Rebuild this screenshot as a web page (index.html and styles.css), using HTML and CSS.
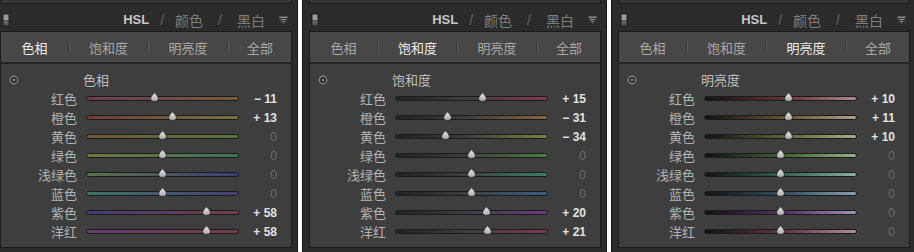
FILE: index.html
```html
<!DOCTYPE html>
<html lang="zh-CN">
<head>
    <meta charset="UTF-8">
    <meta name="viewport" content="width=device-width, initial-scale=1.0">
    <title>HSL 面板</title>
    <link rel="stylesheet" href="styles.css">
</head>
<body>
    <div class="strip" id="strip"></div>

    <script>
        // Slider rows shared by every panel
        const colors = [
            { key: 'red', name: '红色' },
            { key: 'orange', name: '橙色' },
            { key: 'yellow', name: '黄色' },
            { key: 'green', name: '绿色' },
            { key: 'aqua', name: '浅绿色' },
            { key: 'blue', name: '蓝色' },
            { key: 'purple', name: '紫色' },
            { key: 'magenta', name: '洋红' }
        ];

        const tabs = ['色相', '饱和度', '明亮度', '全部'];

        const panels = [
            { mode: 'hue', title: '色相', tab: 0, values: [-11, 13, 0, 0, 0, 0, 58, 58] },
            { mode: 'sat', title: '饱和度', tab: 1, values: [15, -31, -34, 0, 0, 0, 20, 21] },
            { mode: 'lum', title: '明亮度', tab: 2, values: [10, 11, 10, 0, 0, 0, 0, 0] }
        ];

        // Track is 151px inside its border, +/-100 covers 76px each side
        const TRACK_INNER = 151;
        const HALF_RANGE = 76;

        const thumbSvg = `
            <svg class="thumb-icon" width="9" height="10" viewBox="0 0 9 10">
                <defs>
                    <linearGradient id="tg" x1="0" y1="0" x2="0" y2="1">
                        <stop offset="0" stop-color="#f0f0f0"/>
                        <stop offset="1" stop-color="#a4a4a4"/>
                    </linearGradient>
                </defs>
                <path d="M4.5 0.6 C5.4 2.2 8.4 4.2 8.4 6.6 C8.4 8.6 6.9 9.4 4.5 9.4 C2.1 9.4 0.6 8.6 0.6 6.6 C0.6 4.2 3.6 2.2 4.5 0.6 Z"
                      fill="url(#tg)" stroke="#262626" stroke-width="0.8"/>
            </svg>`;

        function formatValue(v) {
            if (v === 0) return '0';
            return (v < 0 ? '\u2212 ' : '+ ') + Math.abs(v);
        }

        function buildHeader() {
            return `
                <div class="header">
                    <svg class="switch" width="8" height="14" viewBox="0 0 8 14">
                        <rect x="0.5" y="0.5" width="7" height="13" fill="#1d1d1d"/>
                        <rect x="1.5" y="1.5" width="5" height="6" fill="#9a9a9a"/>
                        <rect x="1.5" y="7.5" width="5" height="5" fill="#575757"/>
                        <rect x="1.5" y="9" width="5" height="1" fill="#6e6e6e"/>
                    </svg>
                    <div class="modes">
                        <span class="mode active">HSL</span>
                        <span class="slash">/</span>
                        <span class="mode">颜色</span>
                        <span class="slash wide">/</span>
                        <span class="mode">黑白</span>
                        <svg class="collapse" width="9" height="8" viewBox="0 0 9 8">
                            <polygon points="0,0.5 9,0.5 4.5,8" fill="#8c8c8c"/>
                            <rect x="0" y="2" width="9" height="1" fill="#3a3a3a"/>
                            <rect x="0" y="4" width="9" height="1" fill="#3a3a3a"/>
                            <rect x="0" y="6" width="9" height="1" fill="#3a3a3a"/>
                        </svg>
                    </div>
                </div>`;
        }

        function buildTabs(active) {
            let html = '<div class="tabs">';
            tabs.forEach((t, i) => {
                if (i > 0) html += '<span class="sep"></span>';
                html += `<span class="tab tab-${i} ${i === active ? 'active' : ''}">${t}</span>`;
            });
            html += '</div>';
            return html;
        }

        function buildRow(color, value) {
            const left = Math.round(TRACK_INNER / 2 + value / 100 * HALF_RANGE - 4.5);
            return `
                <div class="row c-${color.key}">
                    <span class="label">${color.name}</span>
                    <div class="track">
                        <span class="thumb" style="left: ${left}px">${thumbSvg}</span>
                    </div>
                    <span class="value ${value === 0 ? 'zero' : ''}">${formatValue(value)}</span>
                </div>`;
        }

        function buildPanel(panel) {
            let html = `<div class="panel ${panel.mode}">`;
            html += '<div class="prev"></div>';
            html += buildHeader();
            html += '<div class="box">';
            html += buildTabs(panel.tab);
            html += '<div class="content">';
            html += `
                <div class="title-row">
                    <svg class="target" width="10" height="10" viewBox="0 0 10 10">
                        <circle cx="5" cy="5" r="3.8" fill="#2e2e2e" stroke="#8a8a8a" stroke-width="1.2"/>
                        <circle cx="5" cy="5" r="1.2" fill="#8a8a8a"/>
                    </svg>
                    <span class="title">${panel.title}</span>
                </div>`;
            colors.forEach((c, i) => {
                html += buildRow(c, panel.values[i]);
            });
            html += '</div></div></div>';
            return html;
        }

        document.getElementById('strip').innerHTML = panels.map(buildPanel).join('');
    </script>
</body>
</html>
```

FILE: styles.css
```css
* {
    box-sizing: border-box;
}
html, body {
    margin: 0;
    padding: 0;
}
body {
    width: 914px;
    height: 252px;
    overflow: hidden;
    background-color: #ffffff;
    font-family: "Noto Sans CJK SC", "Liberation Sans", sans-serif;
}
.strip {
    display: flex;
    gap: 4px;
    margin-left: -7px;
}
.panel {
    flex: 0 0 305px;
    height: 252px;
    background-color: #2b2b2b;
    border-left: 1px solid #171717;
    border-right: 1px solid #171717;
}
.prev {
    height: 4px;
    margin: 0 5px 5px 6px;
    background-color: #353535;
    border: 1px solid #1b1b1b;
    border-top: none;
}
.header {
    height: 22px;
    display: flex;
    align-items: center;
    justify-content: space-between;
    padding: 0 9px 0 8px;
}
.switch {
    display: block;
}
.modes {
    display: flex;
    align-items: center;
}
.mode {
    font-size: 14px;
    color: #7e7e7e;
    line-height: 22px;
}
.mode.active {
    font-family: "Liberation Sans", sans-serif;
    font-weight: bold;
    font-size: 13px;
    color: #c6c6c6;
}
.slash {
    font-family: "Liberation Sans", sans-serif;
    font-size: 14px;
    color: #626262;
    margin: 0 11px;
}
.slash.wide {
    margin: 0 15px;
}
.collapse {
    display: block;
    margin-left: 14px;
}
.box {
    margin: 0 5px 0 6px;
    border: 1px solid #1b1b1b;
}
.tabs {
    height: 32px;
    display: flex;
    align-items: center;
    background-color: #474747;
    border-bottom: 2px solid #262626;
}
.tab {
    text-align: center;
    font-size: 13px;
    color: #a8a8a8;
}
.tab.active {
    color: #ececec;
}
.tab-0 { width: 67px; }
.tab-1 { width: 77px; }
.tab-2 { width: 78px; }
.tab-3 { flex: 1; }
.sep {
    width: 2px;
    height: 12px;
    border-left: 1px solid #383838;
    border-right: 1px solid #5a5a5a;
}
.content {
    background-color: #3e3e3e;
    padding: 6px 0 6px;
}
.title-row {
    height: 19px;
    display: flex;
    align-items: center;
}
.target {
    display: block;
    margin-left: 8px;
}
.title {
    margin-left: 64px;
    font-size: 13px;
    color: #bdbdbd;
}
.row {
    height: 19px;
    display: grid;
    grid-template-columns: 76px 153px 1fr;
    column-gap: 9px;
    align-items: center;
    padding-right: 14px;
}
.label {
    text-align: right;
    font-size: 13px;
    color: #b3b3b3;
    line-height: 19px;
}
.value {
    text-align: right;
    font-family: "Liberation Sans", sans-serif;
    font-weight: bold;
    font-size: 12px;
    color: #e2e2e2;
}
.value.zero {
    color: #6c6c6c;
    font-weight: normal;
}
.track {
    position: relative;
    height: 5px;
    border: 1px solid #1c1c1c;
    border-radius: 3px;
}
.thumb {
    position: absolute;
    top: -5px;
    width: 9px;
    height: 10px;
}
.thumb-icon {
    display: block;
}

/* hue tracks */
.hue .c-red .track { background: linear-gradient(to right, #6e3a55, #765c3a); }
.hue .c-orange .track { background: linear-gradient(to right, #743a3a, #74743e); }
.hue .c-yellow .track { background: linear-gradient(to right, #765838, #54743c); }
.hue .c-green .track { background: linear-gradient(to right, #74743c, #3c745e); }
.hue .c-aqua .track { background: linear-gradient(to right, #587446, #3c3c76); }
.hue .c-blue .track { background: linear-gradient(to right, #3c7466, #463f76); }
.hue .c-purple .track { background: linear-gradient(to right, #3e3e76, #763c4a); }
.hue .c-magenta .track { background: linear-gradient(to right, #663c74, #763c42); }

/* saturation tracks */
.sat .c-red .track { background: linear-gradient(to right, #222222, #3c3c3c 45%, #86384a); }
.sat .c-orange .track { background: linear-gradient(to right, #222222, #3c3c3c 45%, #86643e); }
.sat .c-yellow .track { background: linear-gradient(to right, #222222, #3c3c3c 45%, #80803e); }
.sat .c-green .track { background: linear-gradient(to right, #222222, #3c3c3c 45%, #4c7e42); }
.sat .c-aqua .track { background: linear-gradient(to right, #222222, #3c3c3c 45%, #3a7e68); }
.sat .c-blue .track { background: linear-gradient(to right, #222222, #3c3c3c 45%, #3a5e80); }
.sat .c-purple .track { background: linear-gradient(to right, #222222, #3c3c3c 45%, #6c3a80); }
.sat .c-magenta .track { background: linear-gradient(to right, #222222, #3c3c3c 45%, #80385c); }

/* luminance tracks */
.lum .c-red .track { background: linear-gradient(to right, #121212, #6a3434 55%, #b08890); }
.lum .c-orange .track { background: linear-gradient(to right, #121212, #6a5434 55%, #b0a088); }
.lum .c-yellow .track { background: linear-gradient(to right, #121212, #66663a 55%, #acac86); }
.lum .c-green .track { background: linear-gradient(to right, #121212, #44663a 55%, #96b08a); }
.lum .c-aqua .track { background: linear-gradient(to right, #121212, #346656 55%, #88b0a4); }
.lum .c-blue .track { background: linear-gradient(to right, #121212, #345266 55%, #88a0b0); }
.lum .c-purple .track { background: linear-gradient(to right, #121212, #56346a 55%, #a490b0); }
.lum .c-magenta .track { background: linear-gradient(to right, #121212, #6a3450 55%, #b08aa0); }
```
